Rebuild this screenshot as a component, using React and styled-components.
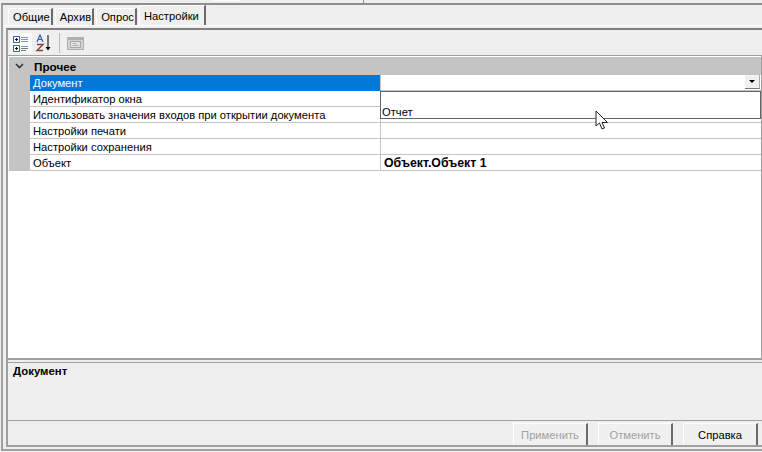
import React from 'react';
import styled, { createGlobalStyle } from 'styled-components';

const GlobalStyle = createGlobalStyle`
  html, body {
    margin: 0;
    padding: 0;
    background: #efefef;
    overflow: hidden;
  }
  #root {
    width: 762px;
    height: 452px;
  }
`;

const Window = styled.div`
  box-sizing: border-box;
  width: 762px;
  height: 452px;
  padding: 0 0 1px 1px;
  display: flex;
  flex-direction: column;
  font-family: 'Liberation Sans', Arial, sans-serif;
  font-size: 11.2px;
  color: #000;
`;

const TopStrip = styled.div`
  height: 3px;
  flex-shrink: 0;
  display: flex;
  align-items: flex-start;
`;

const TopPatch = styled.div`
  width: 27px;
  height: 1px;
  margin-left: 212px;
  background: #fff;
`;

const TopTick = styled.div`
  width: 1px;
  height: 3px;
  margin-left: 123px;
  background: #8e8e8e;
`;

const Frame = styled.div`
  flex: 1;
  display: flex;
  flex-direction: column;
  min-height: 0;
  border-top: 2px solid #8e8e8e;
  border-left: 2px solid #a0a0a0;
  border-bottom: 2px solid #a0a0a0;
`;

const TabStrip = styled.div`
  display: flex;
  align-items: flex-end;
  height: 20px;
  flex-shrink: 0;
  padding-left: 5px;
  gap: 2px;
`;

const Tab = styled.div`
  box-sizing: border-box;
  height: ${(p) => (p.$active ? '20px' : '17px')};
  padding: ${(p) => (p.$active ? '0 5px 0 4px' : '0 1px 0 4px')};
  display: flex;
  align-items: center;
  background: #efefef;
  border-top: 1px solid #fff;
  border-left: 1px solid #fff;
  border-right: 2px solid #6a6a6a;
`;

const Page = styled.div`
  flex: 1;
  display: flex;
  flex-direction: column;
  min-height: 0;
  border-top: 1px solid #fff;
  padding: 2px 0 2px 3px;
`;

const Inner = styled.div`
  flex: 1;
  display: flex;
  flex-direction: column;
  min-height: 0;
  border-left: 2px solid #a0a0a0;
  border-top: 2px solid #808080;
  border-bottom: 2px solid #a0a0a0;
`;

const Toolbar = styled.div`
  height: 25px;
  display: flex;
  align-items: flex-end;
  padding: 0 0 2px 2px;
  box-sizing: border-box;
  gap: 1px;
  flex-shrink: 0;
`;

const ToolButton = styled.div`
  width: 22px;
  height: 20px;
  display: flex;
  align-items: center;
  justify-content: center;
  background: ${(p) => (p.$pressed ? '#f9f9f9' : 'transparent')};
`;

const ToolSeparator = styled.div`
  width: 1px;
  height: 20px;
  margin: 0 3px 0 3px;
  background: #b8b8b8;
`;

const Grid = styled.div`
  position: relative;
  flex: 1;
  min-height: 0;
  padding: 1px 0 0 1px;
  background: #fff;
  border-top: 1px solid #a0a0a0;
  border-bottom: 2px solid #a0a0a0;
  border-right: 1px solid #a0a0a0;
`;

const CategoryRow = styled.div`
  height: 18px;
  display: flex;
  align-items: center;
  background: #c4c4c4;
  font-size: 11.7px;
  font-weight: bold;
`;

const Gutter = styled.div`
  width: 21px;
  height: 100%;
  flex-shrink: 0;
  background: #c4c4c4;
  display: flex;
  align-items: center;
  justify-content: center;
`;

const CategoryTitle = styled.div`
  padding-left: 4px;
`;

const Row = styled.div`
  height: 16px;
  display: flex;
`;

const NameCell = styled.div`
  box-sizing: border-box;
  width: 351px;
  flex-shrink: 0;
  padding-left: 3px;
  display: flex;
  align-items: center;
  white-space: nowrap;
  overflow: hidden;
  background: ${(p) => (p.$selected ? '#0078d7' : '#fff')};
  color: ${(p) => (p.$selected ? '#fff' : '#000')};
  border-bottom: 1px solid ${(p) => (p.$selected ? '#0078d7' : '#c4c4c4')};
  border-right: 1px solid #c4c4c4;
`;

const ValueCell = styled.div`
  flex: 1;
  box-sizing: border-box;
  position: relative;
  padding-left: 3px;
  display: flex;
  align-items: center;
  font-size: ${(p) => (p.$bold ? '12.3px' : 'inherit')};
  font-weight: ${(p) => (p.$bold ? 'bold' : 'normal')};
  border-bottom: 1px solid #c4c4c4;
`;

const DropButton = styled.div`
  position: absolute;
  right: 1px;
  top: 0;
  width: 15px;
  height: 14px;
  box-sizing: border-box;
  background: #f0f0f0;
  border-bottom: 1px solid #777;
  border-right: 1px solid #aaa;
  display: flex;
  align-items: center;
  justify-content: center;
  &::after {
    content: '';
    border-left: 3px solid transparent;
    border-right: 3px solid transparent;
    border-top: 3px solid #000;
  }
`;

const Dropdown = styled.div`
  position: absolute;
  left: 372px;
  top: 35px;
  width: 381px;
  height: 28px;
  box-sizing: border-box;
  background: #fff;
  border: 1px solid #646464;
  display: flex;
  align-items: flex-end;
  padding: 0 0 0 1px;
  line-height: 11px;
`;

const Cursor = styled.svg`
  position: absolute;
  left: 587px;
  top: 54px;
`;

const Description = styled.div`
  height: 59px;
  flex-shrink: 0;
  box-sizing: border-box;
  padding: 2px 5px;
  margin-top: 2px;
  background: #efefef;
  border-top: 1px solid #a0a0a0;
  border-bottom: 1px solid #a0a0a0;
  font-size: 11.4px;
  font-weight: bold;
`;

const ButtonBar = styled.div`
  height: 24px;
  box-sizing: border-box;
  flex-shrink: 0;
  display: flex;
  justify-content: flex-end;
  align-items: flex-start;
  gap: 10px;
  padding: 2px 4px 0 0;
`;

const Button = styled.div`
  box-sizing: border-box;
  width: 75px;
  height: 22px;
  display: flex;
  align-items: center;
  justify-content: center;
  background: #f0f0f0;
  color: ${(p) => (p.$disabled ? '#a0a0a0' : '#000')};
  border-top: 1px solid #fff;
  border-left: 1px solid #fff;
  border-right: 2px solid #6a6a6a;
`;

const CategorizedIcon = () => (
  <svg width="18" height="18" viewBox="0 0 18 18">
    <rect x="1.5" y="2.5" width="6" height="6" fill="#fff" stroke="#3e6aa8" />
    <path d="M3 5.5h3M4.5 4v3" stroke="#111" />
    <rect x="1.5" y="11.5" width="6" height="6" fill="#fff" stroke="#3e6aa8" />
    <path d="M3 14.5h3M4.5 13v3" stroke="#111" />
    <path d="M9 3.5h7M9 5.5h7M9 7.5h7" stroke="#7f9cc0" />
    <path d="M9 12.5h7" stroke="#7f9cc0" />
    <path d="M9 14.5h7M9 16.5h5" stroke="#777" />
  </svg>
);

const SortIcon = () => (
  <svg width="18" height="18" viewBox="0 0 18 18">
    <path d="M2 8 L5 1 L8 8 M3.3 5.5 H6.7" fill="none" stroke="#2f5fb0" strokeWidth="1.2" />
    <path d="M2 10.5 H8 L2 16.5 H8" fill="none" stroke="#8e3f3f" strokeWidth="1.4" />
    <path d="M13 1 V14" stroke="#000" />
    <path d="M10.5 13 H15.5 L13 16.5 Z" fill="#000" />
  </svg>
);

const PagesIcon = () => (
  <svg width="17" height="13" viewBox="0 0 17 13">
    <rect x="0.5" y="0.5" width="16" height="12" fill="#d4d4d4" stroke="#b0b0b0" />
    <path d="M1 2h15" stroke="#b0b0b0" strokeWidth="2" />
    <rect x="3.5" y="4.5" width="10" height="6" fill="#e4e4e4" stroke="#a8a8a8" />
    <path d="M5.5 6.5h4M5.5 8.5h6" stroke="#b0b0b0" />
  </svg>
);

const ChevronIcon = () => (
  <svg width="9" height="6" viewBox="0 0 9 6">
    <path d="M1 1 L4.5 4.5 L8 1" fill="none" stroke="#333" strokeWidth="1.6" />
  </svg>
);

const ROWS = [
  { name: 'Документ', selected: true, dropdown: true },
  { name: 'Идентификатор окна' },
  { name: 'Использовать значения входов при открытии документа' },
  { name: 'Настройки печати' },
  { name: 'Настройки сохранения' },
  { name: 'Объект', value: 'Объект.Объект 1', bold: true },
];

const TABS = ['Общие', 'Архив', 'Опрос', 'Настройки'];

export default function App() {
  return (
    <Window>
      <GlobalStyle />
      <TopStrip>
        <TopPatch />
        <TopTick />
      </TopStrip>
      <Frame>
        <TabStrip>
          {TABS.map((tab) => (
            <Tab key={tab} $active={tab === 'Настройки'}>
              {tab}
            </Tab>
          ))}
        </TabStrip>
        <Page>
          <Inner>
            <Toolbar>
              <ToolButton $pressed>
                <CategorizedIcon />
              </ToolButton>
              <ToolButton>
                <SortIcon />
              </ToolButton>
              <ToolSeparator />
              <ToolButton>
                <PagesIcon />
              </ToolButton>
            </Toolbar>
            <Grid>
              <CategoryRow>
                <Gutter>
                  <ChevronIcon />
                </Gutter>
                <CategoryTitle>Прочее</CategoryTitle>
              </CategoryRow>
              {ROWS.map((row) => (
                <Row key={row.name}>
                  <Gutter />
                  <NameCell $selected={row.selected}>{row.name}</NameCell>
                  <ValueCell $bold={row.bold}>
                    {row.value}
                    {row.dropdown && <DropButton />}
                  </ValueCell>
                </Row>
              ))}
              <Dropdown>Отчет</Dropdown>
              <Cursor width="15" height="21" viewBox="0 0 15 21">
                <path
                  d="M1 1 V16 L4.5 13 L7 19 L9.5 18 L7 12.5 H12.5 Z"
                  fill="#fff"
                  stroke="#222"
                  strokeWidth="1"
                />
              </Cursor>
            </Grid>
            <Description>Документ</Description>
            <ButtonBar>
              <Button $disabled>Применить</Button>
              <Button $disabled>Отменить</Button>
              <Button>Справка</Button>
            </ButtonBar>
          </Inner>
        </Page>
      </Frame>
    </Window>
  );
}
